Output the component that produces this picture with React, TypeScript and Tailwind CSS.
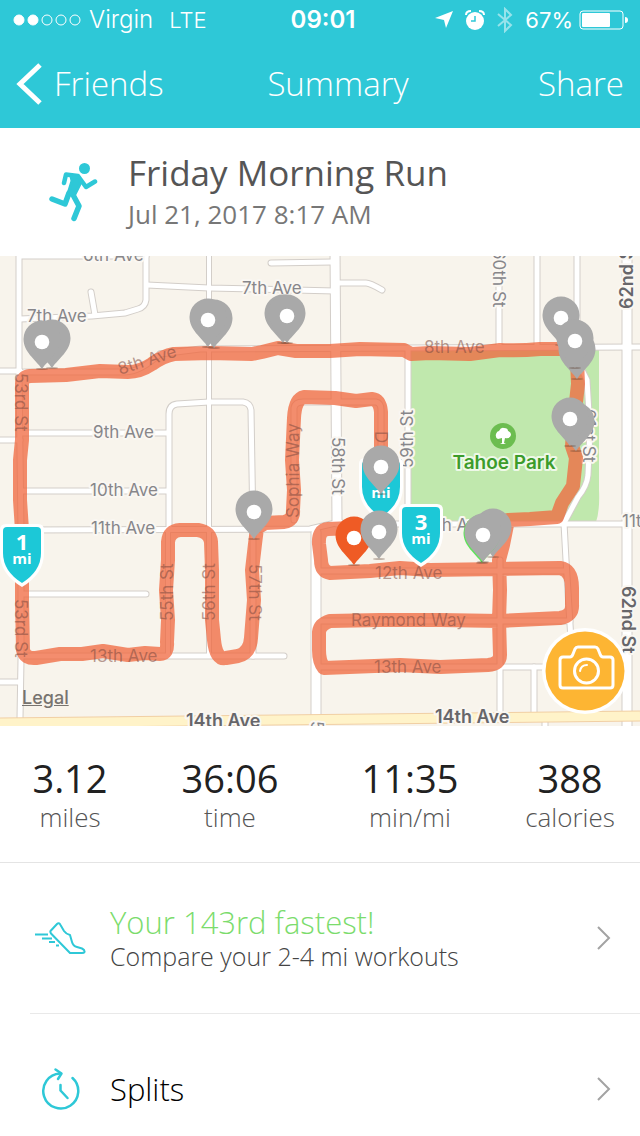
import type { ReactNode } from "react";

type Road = { d: string; w?: number };

// Street grid, drawn twice: casing first, then the white surface on top.
const roads: Road[] = [
  { d: "M19 250V376L21 530V660L20 718", w: 5 },
  { d: "M20 256H146" },
  { d: "M146 250V300Q145 307 138 309L125 313L92 316L20 319", w: 5 },
  { d: "M91 292L95 315", w: 5 },
  { d: "M147 285L209 288L335 291", w: 5 },
  { d: "M209 250V655", w: 4 },
  { d: "M0 371H20" },
  { d: "M0 440H20" },
  { d: "M22 433H168" },
  { d: "M22 491H168" },
  { d: "M169 530V414Q169 405 177 404L209 402H243Q250 403 251 410L253 530V656", w: 5 },
  { d: "M22 530L310 529L340 522", w: 5 },
  { d: "M168 530V656", w: 4 },
  { d: "M24 594H146", w: 5 },
  { d: "M22 656H284", w: 5 },
  { d: "M0 682H20", w: 5 },
  { d: "M271 263L332 262", w: 5 },
  { d: "M336 283H366Q370 283 382 290", w: 5 },
  { d: "M294 520V408Q295 402 303 402H376Q381 403 381 410V520", w: 5 },
  { d: "M335 250L337 522", w: 9 },
  { d: "M316 532V718", w: 9 },
  { d: "M160 354L200 349L408 348L640 347", w: 5 },
  { d: "M24 372H125Q140 372 160 354", w: 5 },
  { d: "M408 348V526", w: 5 },
  { d: "M316 571H564", w: 5 },
  { d: "M316 621H570", w: 5 },
  { d: "M316 667H560", w: 5 },
  { d: "M500 560V715", w: 5 },
  { d: "M534 667V715", w: 5 },
  { d: "M545 720V730", w: 5 },
  { d: "M564 523L566 560L571 640", w: 5 },
  { d: "M340 524H640", w: 5 },
  { d: "M499 250V347", w: 5 },
  { d: "M537 250V347", w: 5 },
  { d: "M577 250V347", w: 5 },
  { d: "M627 250V730", w: 9 },
];

const parkRoad = "M577 347L580 366L587 380L590 430L588 475Q587 486 578 497L564 523";

const route =
  "M561 349L540 349Q520 351 500 350L470 354L430 353L411 354L404 350L360 349L330 351L296 351L278 348L262 352L252 354L210 353L174 354Q163 356 152 364Q140 372 128 372L100 371L66 375L30 376Q22 377 22 384V440L20 460V500L22 530V600L23 650Q25 659 36 658L60 654L82 654L103 651L128 655L145 653L160 654Q168 654 167 642L168 620L166 590L168 560V542Q169 531 180 530H198Q210 532 211 542L212 570V620L214 640Q216 660 226 658L238 656Q250 653 251 638L254 600L252 570L255 544L257 528L265 523L284 522Q294 520 293 510L294 490L292 460L294 418Q295 399 304 397L335 398L356 401L372 399Q380 400 381 412V470";

const routeSouth =
  "M577 360L578 384L574 420L572 446L576 458L573 486L562 503L557 517L530 519L508 520L503 545L499 560L500 590L499 620L500 655Q500 664 488 665L440 667L400 665L324 668Q319 662 319 650V632Q320 624 330 621L380 620L440 620L500 621L560 618Q573 616 572 604V588Q572 570 560 568L500 569L430 570L400 568L370 571L330 573Q321 571 321 560L319 544Q318 530 328 529L352 528L384 530";

type Label = { t: string; x: number; y: number; r?: number; bold?: boolean };

const streetLabels: Label[] = [
  { t: "6th Ave", x: 83, y: 261 },
  { t: "7th Ave", x: 27, y: 322 },
  { t: "7th Ave", x: 242, y: 294 },
  { t: "9th Ave", x: 93, y: 438 },
  { t: "10th Ave", x: 90, y: 496 },
  { t: "11th Ave", x: 91, y: 534 },
  { t: "11th Ave", x: 422, y: 531 },
  { t: "11th Ave", x: 622, y: 527 },
  { t: "58th St", x: 332, y: 437, r: 90 },
  { t: "58th St", x: 311, y: 721, r: 90 },
  { t: "59th St", x: 413, y: 468, r: -90 },
  { t: "60th St", x: 493, y: 249, r: 90 },
  { t: "61st St", x: 583, y: 409, r: 90 },
  { t: "62nd St", x: 633, y: 309, r: -90, bold: true },
  { t: "62nd St", x: 622, y: 586, r: 90, bold: true },
  { t: "14th Ave", x: 186, y: 727, bold: true },
  { t: "14th Ave", x: 435, y: 723, bold: true },
];

// Streets the run follows, so their names sit inside the orange line.
const routeLabels: Label[] = [
  { t: "8th Ave", x: 120, y: 375, r: -18 },
  { t: "8th Ave", x: 424, y: 353 },
  { t: "13th Ave", x: 90, y: 662 },
  { t: "12th Ave", x: 375, y: 579 },
  { t: "13th Ave", x: 374, y: 673 },
  { t: "Raymond Way", x: 351, y: 626 },
  { t: "53rd St", x: 15, y: 373, r: 90 },
  { t: "53rd St", x: 15, y: 599, r: 90 },
  { t: "55th St", x: 173, y: 621, r: -90 },
  { t: "56th St", x: 215, y: 621, r: -90 },
  { t: "57th St", x: 249, y: 564, r: 90 },
  { t: "Sophia Way", x: 299, y: 518, r: -90 },
  { t: "D", x: 375, y: 431, r: 90 },
];

// x and y are the centre of the pin's white hole; later pins cover earlier ones.
const pins: { x: number; y: number; color?: string; covered?: boolean }[] = [
  { x: 52, y: 341, covered: true },
  { x: 42, y: 342 },
  { x: 214, y: 321, covered: true },
  { x: 208, y: 320 },
  { x: 283, y: 316, covered: true },
  { x: 287, y: 316 },
  { x: 561, y: 318 },
  { x: 577, y: 352, covered: true },
  { x: 575, y: 341 },
  { x: 576, y: 424, covered: true },
  { x: 570, y: 419 },
  { x: 381, y: 467 },
  { x: 254, y: 512 },
  { x: 354, y: 538, color: "#ef5b25" },
  { x: 379, y: 532 },
  { x: 493, y: 530, covered: true },
  { x: 482, y: 536, color: "#5fe35a", covered: true },
  { x: 483, y: 535 },
];

const miles = [
  { n: 1, x: 22, y: 526 },
  { n: 2, x: 381, y: 460 },
  { n: 3, x: 421, y: 506 },
];

const stats = [
  { value: "3.12", unit: "miles" },
  { value: "36:06", unit: "time" },
  { value: "11:35", unit: "min/mi" },
  { value: "388", unit: "calories" },
];

export default function App() {
  return (
    <div className="h-screen overflow-hidden bg-white font-['Open_Sans',sans-serif] text-[#212121]">
      <header className="bg-[#2ec8d7] text-white">
        <StatusBar />
        <nav className="grid h-[88px] grid-cols-[1fr_auto_1fr] items-center px-4 text-[33px] font-light">
          <button type="button" className="flex items-center gap-3 justify-self-start">
            <svg viewBox="0 0 26 42" className="h-[42px] w-[26px]" aria-hidden>
              <path d="M24 2L4 21L24 40" fill="none" stroke="white" strokeWidth="5" />
            </svg>
            Friends
          </button>
          <h1 className="ml-9">Summary</h1>
          <button type="button" className="justify-self-end">
            Share
          </button>
        </nav>
      </header>

      <main>
        <section className="flex h-32 items-center gap-[30px] pl-[49px]">
          <Runner />
          <div>
            <h2 className="text-[35px] leading-[44px] text-[#555]">Friday Morning Run</h2>
            <p className="text-[26px] leading-[38px] text-[#777]">Jul 21, 2017 8:17 AM</p>
          </div>
        </section>

        <div className="relative">
          <RouteMap />
          <a
            href="#legal"
            className="absolute bottom-4 left-[22px] font-['Inter',sans-serif] text-[18px] leading-6 font-medium text-[#77736f] underline"
          >
            Legal
          </a>
          <button type="button" aria-label="Add photo" className="absolute right-3 bottom-3">
            <Camera />
          </button>
        </div>

        <dl className="grid h-[137px] grid-cols-[140px_1fr_1fr_140px] items-center border-b border-[#e4e4e4]">
          {stats.map((s) => (
            <div key={s.unit} className="flex flex-col-reverse text-center">
              <dt className="text-[26px] leading-8 font-light text-[#555]">{s.unit}</dt>
              <dd className="text-[38px] leading-[46px] font-medium">{s.value}</dd>
            </div>
          ))}
        </dl>

        <Row icon={<Shoe />}>
          <span className="text-[31px] leading-9 font-light text-[#7bdc6c]">Your 143rd fastest!</span>
          <span className="text-[25px] leading-8 font-light text-[#444]">Compare your 2-4 mi workouts</span>
        </Row>
        <div className="ml-[30px] h-px bg-[#e9e9e9]" />
        <Row icon={<SplitClock />}>
          <span className="text-[31px] leading-9 font-light text-black">Splits</span>
        </Row>
      </main>
    </div>
  );
}

function StatusBar() {
  return (
    <div className="grid h-10 grid-cols-[1fr_auto_1fr] items-center pr-[11px] pl-[13px] font-['Inter',sans-serif] text-[24px] leading-7">
      <div className="flex items-center font-light">
        <svg viewBox="0 0 68 12" className="mr-2 h-3 w-[68px]" aria-hidden>
          {[0, 1, 2, 3, 4].map((i) => (
            <circle key={i} cx={6 + i * 14} cy="6" r="5" fill={i < 2 ? "white" : "none"} stroke="white" />
          ))}
        </svg>
        Virgin
        <span className="ml-4 text-[22px]">LTE</span>
      </div>
      <span className="ml-1 font-semibold">09:01</span>
      <div className="flex items-center justify-end text-[22px]">
        <svg viewBox="0 0 18 18" className="h-[18px] w-[18px]" aria-hidden>
          <path d="M18 0L11 17L9 9L0 7Z" fill="white" />
        </svg>
        <svg viewBox="0 0 20 20" className="ml-3 h-5 w-5" aria-hidden>
          <circle cx="10" cy="11" r="9" fill="white" />
          <path d="M1 5Q1 1 6 1M14 1Q19 1 19 5" fill="none" stroke="white" strokeWidth="2" />
          <path d="M10 6V11H6" fill="none" stroke="#2ec8d7" strokeWidth="1.5" />
        </svg>
        <svg viewBox="0 0 16 26" className="mx-3 h-[26px] w-4 opacity-50" aria-hidden>
          <path d="M1 7L14 18L8 24V2L14 8L1 19" fill="none" stroke="white" strokeWidth="2" />
        </svg>
        67%
        <svg viewBox="0 0 50 20" className="ml-1.5 h-5 w-[50px]" aria-hidden>
          <rect x="1" y="1" width="43" height="18" rx="3" fill="none" stroke="white" />
          <rect x="3" y="3" width="28" height="14" rx="1" fill="white" />
          <path d="M46 7Q49 7 49 10T46 13Z" fill="white" />
        </svg>
      </div>
    </div>
  );
}

function MapLabel({ label }: { label: Label }) {
  return (
    <text
      transform={`translate(${label.x} ${label.y}) rotate(${label.r ?? 0})`}
      fill={label.bold ? "#67666a" : undefined}
      fontWeight={label.bold ? 600 : undefined}
      fontSize={label.bold ? 18 : undefined}
    >
      {label.t}
    </text>
  );
}

function RouteMap() {
  return (
    <svg viewBox="0 256 640 470" className="block w-full font-['Inter',sans-serif]" role="img" aria-label="Route map">
      <rect y="256" width="640" height="470" fill="#f8f4ec" />
      <path d="M411 348H599V490Q600 510 596 522H440Q424 522 411 514Z" fill="#c0e8ad" />
      <g fill="none" stroke="#d3cec9" strokeLinecap="round">
        {roads.map((r) => (
          <path key={r.d} d={r.d} strokeWidth={(r.w ?? 5) + 2} />
        ))}
        <path d={parkRoad} strokeWidth="7" />
      </g>
      <g fill="none" stroke="#fff" strokeLinecap="round">
        {roads.map((r) => (
          <path key={r.d} d={r.d} strokeWidth={r.w ?? 5} />
        ))}
        <path d={parkRoad} strokeWidth="5" />
      </g>
      <path d="M0 723L640 716" stroke="#f1cfa4" strokeWidth="11" />
      <path d="M0 723L640 716" stroke="#fff3c9" strokeWidth="9" />

      <g fill="#87868a" stroke="#faf7f2" strokeWidth="4" strokeLinejoin="round" paintOrder="stroke" fontSize="17">
        {streetLabels.map((l) => (
          <MapLabel key={`${l.t}-${l.x}`} label={l} />
        ))}
      </g>

      <circle cx="503" cy="436" r="13" fill="#6cbd50" />
      <path
        d="M502 443V438L498 439Q495 438 496 434Q497 431 499 431Q501 427 504 428Q508 428 508 431Q511 432 511 435Q510 439 505 438L504 443L506 444H500Z"
        fill="white"
      />
      <text
        x="504"
        y="469"
        textAnchor="middle"
        fontSize="19"
        fontWeight="600"
        fill="#3c9c2b"
        stroke="#eef8e8"
        strokeWidth="4"
        strokeLinejoin="round"
        paintOrder="stroke"
      >
        Tahoe Park
      </text>

      <g fill="none" stroke="#f0673d" strokeWidth="14" strokeLinecap="round" strokeLinejoin="round" opacity="0.75">
        <path d={route} />
        <path d={routeSouth} />
      </g>
      <g fill="#7d4a40" fillOpacity="0.55" fontSize="17">
        {routeLabels.map((l) => (
          <MapLabel key={`${l.t}-${l.x}-${l.y}`} label={l} />
        ))}
      </g>

      {miles.map((m) => (
        <g key={m.n} transform={`translate(${m.x} ${m.y})`}>
          <path d="M-16 -2H16Q22 -2 22 4V27Q22 48 0 61Q-22 48 -22 27V4Q-22 -2 -16 -2Z" fill="white" />
          <path d="M-15 1H15Q19 1 19 5V27Q19 45 0 57Q-19 45 -19 27V5Q-19 1 -15 1Z" fill="#1cc8d7" />
          <g fill="white" textAnchor="middle" fontWeight="700" className="font-['Open_Sans',sans-serif]">
            <text y="24" fontSize="22">
              {m.n}
            </text>
            <text y="38" fontSize="15">
              mi
            </text>
          </g>
        </g>
      ))}

      {pins.map((p) => (
        <g key={`${p.x}-${p.y}`} transform={`translate(${p.x} ${p.y})`}>
          <ellipse cy="27" rx="6" ry="1" fill="#5a3a2c" opacity="0.35" />
          <path
            d="M0 27C-7 17 -18.5 10 -18.5 -3A18.5 18.5 0 0 1 18.5 -3C18.5 10 7 17 0 27Z"
            fill={p.color ?? "#a9a9a9"}
          />
          {!p.covered && <circle r="7.3" fill="white" />}
        </g>
      ))}
    </svg>
  );
}

function Row({ icon, children }: { icon: ReactNode; children: ReactNode }) {
  return (
    <button type="button" className="flex h-[150px] w-full items-center pr-7 pl-[35px] text-left">
      <span className="mr-6 flex w-[51px] justify-center">{icon}</span>
      <span className="flex flex-1 flex-col">{children}</span>
      <svg viewBox="0 0 16 26" className="h-[26px] w-4" aria-hidden>
        <path d="M2 2L13 13L2 24" fill="none" stroke="#a3a3a3" strokeWidth="2" />
      </svg>
    </button>
  );
}

function Runner() {
  return (
    <svg viewBox="49 163 49 60" className="h-[60px] w-[49px]" fill="none" stroke="#2ec8d7" strokeLinecap="round" strokeLinejoin="round" aria-hidden>
      <circle cx="84.500" cy="169.500" r="5.500" fill="#2ec8d7" stroke="none" />
      <path d="M64 184L66 175.500L78 177L86 188L95 182.500" strokeWidth="4.500" />
      <path d="M71 177L79 178L81 183L74 197L68 195L72 182Z" fill="#2ec8d7" strokeWidth="3" />
      <path d="M69 194L65 205L52 200" strokeWidth="5.500" />
      <path d="M72 194L79 207L74 219.500" strokeWidth="5.500" />
    </svg>
  );
}

function Camera() {
  return (
    <svg viewBox="0 0 86 86" className="h-[86px] w-[86px]" fill="none" stroke="white" strokeLinejoin="round" aria-hidden>
      <circle cx="43" cy="43" r="43" fill="white" stroke="none" />
      <circle cx="43" cy="43" r="39.500" fill="#fdb533" stroke="none" />
      <path
        d="M21 29H28Q30 29 31 26L33 21Q34 19 36 19H53Q55 19 56 21L58 26Q59 29 61 29H68Q71 29 71 32V57Q71 60 68 60H21Q18 60 18 57V32Q18 29 21 29Z"
        strokeWidth="3"
      />
      <circle cx="44.500" cy="43" r="12" strokeWidth="3" />
      <path d="M38 43Q39 37 45 37" strokeWidth="2" strokeLinecap="round" />
    </svg>
  );
}

function Shoe() {
  return (
    <svg viewBox="35 921 51 34" className="h-[34px] w-[51px]" fill="none" stroke="#2ec8d7" strokeWidth="2" strokeLinejoin="round" aria-hidden>
      <path d="M50.500 931L57 924Q59 922 60.500 925L64 931Q66 934 70 935L72 942Q73 946 77 947L82 948.500Q85 950 84.500 952Q84 953 82 953H70L51 933.500Q50 932 50.500 931Z" />
      <path d="M35 934.500H48M42 938.500H52M49 942H55M56 945.500H59" />
    </svg>
  );
}

function SplitClock() {
  return (
    <svg viewBox="41 1068 40 44" className="h-11 w-10" fill="none" stroke="#2ec8d7" strokeWidth="2.500" strokeLinecap="round" strokeLinejoin="round" aria-hidden>
      <path d="M72.500 1079A17.500 17.500 0 1 1 60 1074.500" />
      <path d="M55.500 1070.500L61.500 1074.500L58 1080" />
      <path d="M60.500 1086V1091.500L67.500 1099" />
    </svg>
  );
}
